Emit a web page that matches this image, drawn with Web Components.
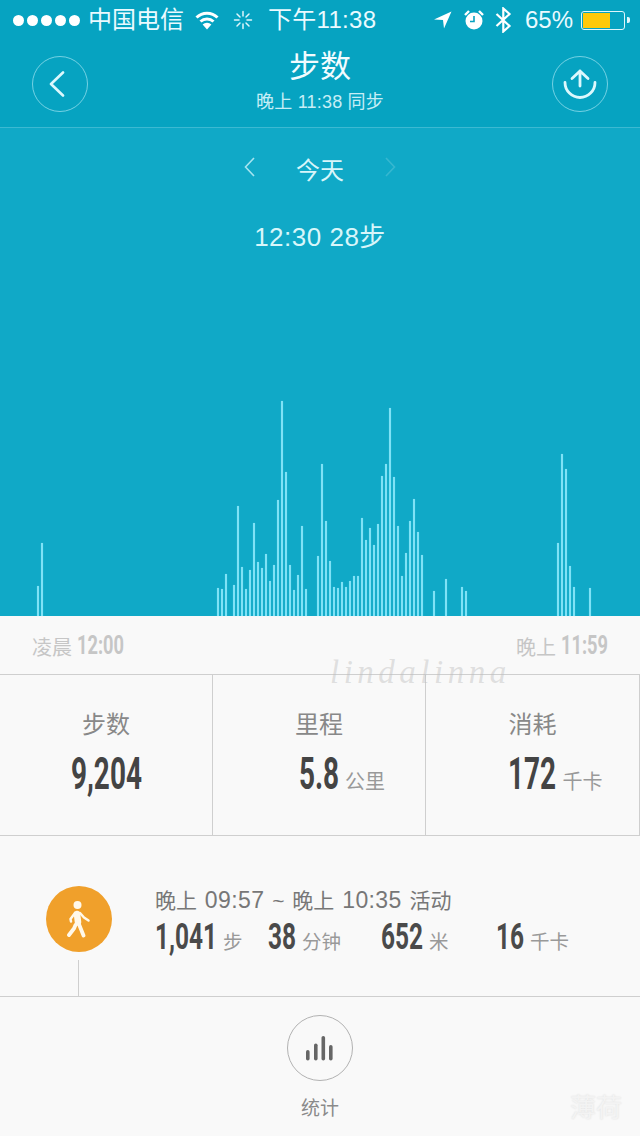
<!DOCTYPE html>
<html lang="zh">
<head>
<meta charset="UTF-8">
<title>步数</title>
<style>
  html, body { margin: 0; padding: 0; }
  body { width: 640px; height: 1136px; overflow: hidden; position: relative; background: #f9f9f9;
         font-family: "Liberation Sans", "Noto Sans CJK SC", sans-serif; }
</style>
</head>
<body>
<step-page>
  <top-header slot="top"></top-header>
  <chart-panel slot="top"></chart-panel>
  <time-axis from="12:00" to="11:59"></time-axis>
  <stat-row>
    <stat-cell label="步数"><cond-num v="9,204"></cond-num></stat-cell>
    <stat-cell label="里程" unit="公里" shift="46"><cond-num v="5.8"></cond-num></stat-cell>
    <stat-cell label="消耗" unit="千卡" shift="46"><cond-num v="172"></cond-num></stat-cell>
  </stat-row>
  <activity-row></activity-row>
  <bottom-tab></bottom-tab>
</step-page>
<water-mark></water-mark>

<script>
// 状态栏
class StatusBar extends HTMLElement {
  connectedCallback() {
    this.attachShadow({ mode: "open" }).innerHTML = `
      <style>
        :host { display: flex; align-items: center; height: 40px; color: #eafaff; font-size: 24px; line-height: 40px; white-space: nowrap; }
        .dots { display: flex; gap: 3px; margin: 0 8px 0 13px; }
        .dots i { width: 11px; height: 11px; border-radius: 50%; background: #fff; }
        svg { display: block; flex: none; }
        .net { width: 94px; }
        .time { width: 111px; letter-spacing: .3px; }
        .pct { width: 50px; }
        .bat { width: 44px; height: 19px; box-sizing: border-box; border: 1px solid #dff6fb; border-radius: 3px; padding: 1px; }
        .bat b { display: block; width: 27px; height: 100%; background: #ffc90a; }
        .nub { width: 3px; height: 6px; margin-left: 2px; background: #dff6fb; border-radius: 0 2px 2px 0; }
      </style>
      <div class="dots"><i></i><i></i><i></i><i></i><i></i></div>
      <span class="net">中国电信</span>
      <svg style="margin-left:13px" width="24" height="20" viewBox="0 0 24 20" fill="none" stroke="#fff" stroke-width="3">
        <path d="M1.5 7.5a15 15 0 0 1 21 0"/><path d="M5.5 11.5a9.5 9.5 0 0 1 13 0"/><path fill="#fff" stroke="none" d="M7.6 14.6a6.2 6.2 0 0 1 8.8 0L12 19.6z"/>
      </svg>
      <svg style="margin-left:14px" width="20" height="20" viewBox="0 0 20 20" stroke="#dff6fb" stroke-width="1.5" stroke-linecap="round">
        <path d="M10 1.5v4.5M10 14v4.5M1.5 10H6M14 10h4.5M4 4l3 3M13 13l3 3M4 16l3-3M13 7l3-3"/>
      </svg>
      <span class="time" style="margin-left:15px">下午11:38</span>
      <svg style="margin-left:55px" width="18" height="18" viewBox="0 0 18 18" fill="#fff"><path d="M17.5 .5L0 8.5l9 .6L10 17.5z"/></svg>
      <svg style="margin-left:12px" width="20" height="20" viewBox="0 0 20 20">
        <circle cx="10" cy="11" r="8.500" fill="#fff"/><path d="M10 6v5.500H6" fill="none" stroke="#07a2c0" stroke-width="1.600"/>
        <path d="M1 5l4-4M19 5l-4-4" stroke="#fff" stroke-width="2.400"/>
      </svg>
      <svg style="margin-left:11px" width="17" height="26" viewBox="0 0 17 26" fill="none" stroke="#fff" stroke-width="2.200">
        <path d="M1.500 7l13 12-6.200 5.500V1.500L14.500 7l-13 12"/>
      </svg>
      <span class="pct" style="margin-left:13px">65%</span>
      <div class="bat" style="margin-left:6px"><b></b></div>
      <div class="nub"></div>`;
  }
}

// 圆形图标按钮
class RoundButton extends HTMLElement {
  connectedCallback() {
    this.attachShadow({ mode: "open" }).innerHTML = `
      <style>
        :host { display: flex; align-items: center; justify-content: center; box-sizing: border-box; width: 56px; height: 56px;
                border-radius: 50%; border: 1px solid rgba(190,240,250,.6); }
      </style>
      <slot></slot>`;
  }
}

class TopHeader extends HTMLElement {
  connectedCallback() {
    this.attachShadow({ mode: "open" }).innerHTML = `
      <style>
        :host { display: block; background: #06a3c1; border-bottom: 1px solid #3cb9d2; color: #fff; }
        .nav { display: flex; justify-content: space-between; align-items: center; height: 87px; padding: 0 32px; }
        .mid { text-align: center; padding-bottom: 6px; }
        .title { font-size: 31px; line-height: 44px; color: #f2fcff; margin-top: -3px; }
        .sub { font-size: 18px; line-height: 22px; color: #c6eef6; margin-top: 2px; letter-spacing: .2px; }
      </style>
      <status-bar></status-bar>
      <div class="nav">
        <round-button>
          <svg style="margin-right:6px" width="16" height="26" viewBox="0 0 16 26" fill="none" stroke="#dcf8fd" stroke-width="2.600" stroke-linecap="round" stroke-linejoin="round"><path d="M14 1.500L2 13l12 11.500"/></svg>
        </round-button>
        <div class="mid"><div class="title">步数</div><div class="sub">晚上 11:38 同步</div></div>
        <round-button>
          <svg width="34" height="30" viewBox="0 0 34 30" fill="none" stroke="#dcf8fd" stroke-width="2.800" stroke-linecap="round" stroke-linejoin="round"><path d="M2 13.500a15 15 0 0 0 30 0"/><path d="M17 17V2M9 9.500L17 2l8 7.500"/></svg>
        </round-button>
      </div>`;
  }
}

// 日期切换 + 图表
class ChartPanel extends HTMLElement {
  connectedCallback() {
    // [x, 顶部 y]，柱子底部在 616
    const bars = [[38,586],[42,543],[218,588],[222,589],[226,574],[234,585],[238,506],[242,567],[246,589],[250,570],[254,523],[258,562],[262,568],[266,554],[270,581],[274,565],[278,500],[282,401],[286,472],[290,565],[294,590],[298,575],[302,526],[306,589],[318,556],[322,464],[326,521],[330,561],[334,587],[338,588],[342,582],[346,587],[350,581],[354,576],[358,576],[362,518],[366,540],[370,528],[374,545],[378,524],[382,476],[386,464],[390,408],[394,477],[398,526],[402,576],[406,553],[410,521],[414,499],[418,532],[422,555],[434,591],[446,579],[462,587],[466,591],[558,543],[562,454],[566,469],[570,566],[574,587],[590,588]];
    const tops = {};
    bars.forEach(([x, y]) => tops[x] = y);
    let slots = "";
    for (let i = 0; i < 160; i++) {
      const h = tops[i * 4 + 2] ? 616 - tops[i * 4 + 2] : 0;
      slots += `<span><i style="height:${h}px"></i></span>`;
    }
    this.attachShadow({ mode: "open" }).innerHTML = `
      <style>
        :host { display: flex; flex-direction: column; height: 488px; background: #10a9c7; color: #d8f6fa; }
        .pager { display: flex; justify-content: center; align-items: center; height: 80px; font-size: 24px; }
        .pager span { width: 48px; text-align: center; margin: 0 41px; }
        .pager svg { margin-bottom: 2px; }
        .pick { text-align: center; font-size: 26px; line-height: 32px; margin-top: 13px; letter-spacing: .5px; }
        .bars { margin-top: auto; display: flex; align-items: flex-end; height: 220px; }
        .bars span { flex: 0 0 4px; display: flex; justify-content: center; }
        .bars i { width: 2px; background: #7fe2f6; box-shadow: 0 0 1px rgba(127,226,246,.7); }
      </style>
      <div class="pager">
        <svg width="11" height="20" viewBox="0 0 11 20" fill="none" stroke="#a6e4f0" stroke-width="1.600"><path d="M10 1L1.500 10l8.500 9"/></svg>
        <span>今天</span>
        <svg width="11" height="20" viewBox="0 0 11 20" fill="none" stroke="#37b7d0" stroke-width="1.600"><path d="M1 1l8.500 9L1 19"/></svg>
      </div>
      <div class="pick">12:30 28步</div>
      <div class="bars">${slots}</div>`;
  }
}

class TimeAxis extends HTMLElement {
  connectedCallback() {
    this.attachShadow({ mode: "open" }).innerHTML = `
      <style>
        :host { display: flex; justify-content: space-between; align-items: center; height: 58px; padding: 0 32px; color: #c6c6c6; font-size: 20px; border-bottom: 1px solid #cfcfcf; }
        div { display: flex; align-items: center; gap: 5px; }
        em { font-style: normal; padding-top: 3px; }
        cond-num { font-size: 26px; font-weight: 700; }
      </style>
      <div><em>凌晨</em><cond-num v="${this.getAttribute("from")}" s=".7"></cond-num></div>
      <div><em>晚上</em><cond-num v="${this.getAttribute("to")}" s=".7"></cond-num></div>`;
  }
}

class StatRow extends HTMLElement {
  connectedCallback() {
    this.attachShadow({ mode: "open" }).innerHTML = `
      <style>:host { display: grid; grid-template-columns: 213px 213px 214px; height: 160px; border-bottom: 1px solid #cfcfcf; }</style>
      <slot></slot>`;
  }
}

class StatCell extends HTMLElement {
  connectedCallback() {
    const unit = this.getAttribute("unit");
    this.attachShadow({ mode: "open" }).innerHTML = `
      <style>
        :host { display: flex; flex-direction: column; align-items: center; box-sizing: border-box; border-right: 1px solid #cfcfcf; padding-top: 33px; }
        .label { font-size: 24px; line-height: 34px; color: #888; }
        .val { display: flex; align-items: baseline; gap: 6px; margin-top: 4px; line-height: 56px; color: #444; font-size: 45px; font-weight: 700; margin-left: ${this.getAttribute("shift") || 0}px; }
        .unit { font-size: 20px; font-weight: 400; color: #999; }
      </style>
      <div class="label">${this.getAttribute("label")}</div>
      <div class="val"><slot></slot>${unit ? `<span class="unit">${unit}</span>` : ""}</div>`;
  }
}

class ActivityRow extends HTMLElement {
  connectedCallback() {
    const item = (v, u) => `<div class="item"><cond-num v="${v}" s=".66"></cond-num><span>${u}</span></div>`;
    this.attachShadow({ mode: "open" }).innerHTML = `
      <style>
        :host { display: flex; height: 160px; border-bottom: 1px solid #cfcfcf; }
        .rail { flex: 0 0 155px; display: flex; flex-direction: column; align-items: center; box-sizing: border-box; padding: 50px 0 0 3px; }
        .dot { flex: none; display: flex; align-items: center; justify-content: center; width: 66px; height: 66px; border-radius: 50%; background: #f0a02b; }
        .line { flex: 1; width: 1px; background: #cfcfcf; margin: 8px 2px 0 0; }
        .wrap { flex: 1; padding-top: 49px; }
        .when { font-size: 21px; line-height: 30px; color: #777; white-space: nowrap; word-spacing: 2px; }
        .when b { font-weight: 400; font-size: 23px; letter-spacing: .4px; }
        .nums { display: grid; grid-template-columns: 113px 113px 115px 1fr; margin-top: -1px; }
        .item { display: flex; align-items: baseline; gap: 6px; font-size: 37px; line-height: 44px; font-weight: 700; color: #4a4a4a; }
        .item span { font-size: 19.500px; font-weight: 400; color: #999; }
      </style>
      <div class="rail">
        <div class="dot">
          <svg width="24" height="37" viewBox="0 0 24 37" fill="none" stroke="#fff8ea" stroke-linecap="round" stroke-linejoin="round">
            <circle cx="10.500" cy="4" r="4" fill="#fff8ea" stroke="none"/>
            <path stroke-width="6.500" d="M10 13l1 8"/>
            <path stroke-width="2.500" d="M8 12l-4.500 6 .5 2.500M13 12l4 4.500 4.500 3"/>
            <path stroke-width="3.800" d="M11.500 22l5 12.500M8.500 24l-1.500 3.500-5 6.500"/>
          </svg>
        </div>
        <div class="line"></div>
      </div>
      <div class="wrap">
        <div class="when">晚上 <b>09:57</b> ~ 晚上 <b>10:35</b> 活动</div>
        <div class="nums">${item("1,041", "步")}${item("38", "分钟")}${item("652", "米")}${item("16", "千卡")}</div>
      </div>`;
  }
}

class BottomTab extends HTMLElement {
  connectedCallback() {
    this.attachShadow({ mode: "open" }).innerHTML = `
      <style>
        :host { display: flex; flex-direction: column; align-items: center; padding-top: 18px; }
        .ring { display: flex; align-items: center; justify-content: center; box-sizing: border-box; width: 66px; height: 66px; border-radius: 50%; border: 1.500px solid #b2b2b2; }
        .txt { font-size: 19px; line-height: 28px; color: #8a8a8a; margin-top: 14px; }
      </style>
      <div class="ring">
        <svg width="28" height="25" viewBox="0 0 28 25" fill="#666">
          <rect x="0" y="14" width="3.600" height="10.500" rx="1.800"/><rect x="8" y="7.500" width="3.600" height="17" rx="1.800"/><rect x="15.500" y="0" width="3.600" height="24.500" rx="1.800"/><rect x="23" y="9" width="3.600" height="15.500" rx="1.800"/>
        </svg>
      </div>
      <div class="txt">统计</div>`;
  }
}

// 整页：上半部分 + 下半部分
class StepPage extends HTMLElement {
  connectedCallback() {
    this.attachShadow({ mode: "open" }).innerHTML = `
      <style>:host { display: block; height: 1136px; overflow: hidden; background: #f9f9f9; }</style>
      <slot name="top"></slot><slot></slot>`;
  }
}

// 截图上的水印
class WaterMark extends HTMLElement {
  connectedCallback() {
    this.attachShadow({ mode: "open" }).innerHTML = `
      <style>
        .a, .b { position: absolute; white-space: nowrap; }
        .a { left: 330px; top: 650px; font: italic 33px/44px "Liberation Serif", serif; letter-spacing: 4.500px; color: rgba(190,190,190,.45); }
        .b { left: 570px; top: 1087px; font: 26px/38px "Noto Sans CJK SC", sans-serif; color: #f3f3f3; text-shadow: 0 0 2px #ddd; }
      </style>
      <div class="a">lindalinna</div>
      <div class="b">薄荷</div>`;
  }
}

// 窄体数字：系统里没有 DIN Condensed，用横向压缩代替
class CondNum extends HTMLElement {
  connectedCallback() {
    const s = this.getAttribute("s") || ".62";
    this.attachShadow({ mode: "open" }).innerHTML = `
      <style>
        :host { display: inline-block; font-family: Roboto, sans-serif; white-space: nowrap; }
        span { display: inline-block; transform: scaleX(${s}); transform-origin: 0 50%; }
      </style>
      <span>${this.getAttribute("v")}</span>`;
    const w = this.shadowRoot.querySelector("span").getBoundingClientRect().width;
    this.style.width = w + "px";
  }
}

customElements.define("status-bar", StatusBar);
customElements.define("round-button", RoundButton);
customElements.define("top-header", TopHeader);
customElements.define("chart-panel", ChartPanel);
customElements.define("time-axis", TimeAxis);
customElements.define("stat-row", StatRow);
customElements.define("stat-cell", StatCell);
customElements.define("activity-row", ActivityRow);
customElements.define("bottom-tab", BottomTab);
customElements.define("step-page", StepPage);
customElements.define("water-mark", WaterMark);
customElements.define("cond-num", CondNum);
</script>
</body>
</html>
